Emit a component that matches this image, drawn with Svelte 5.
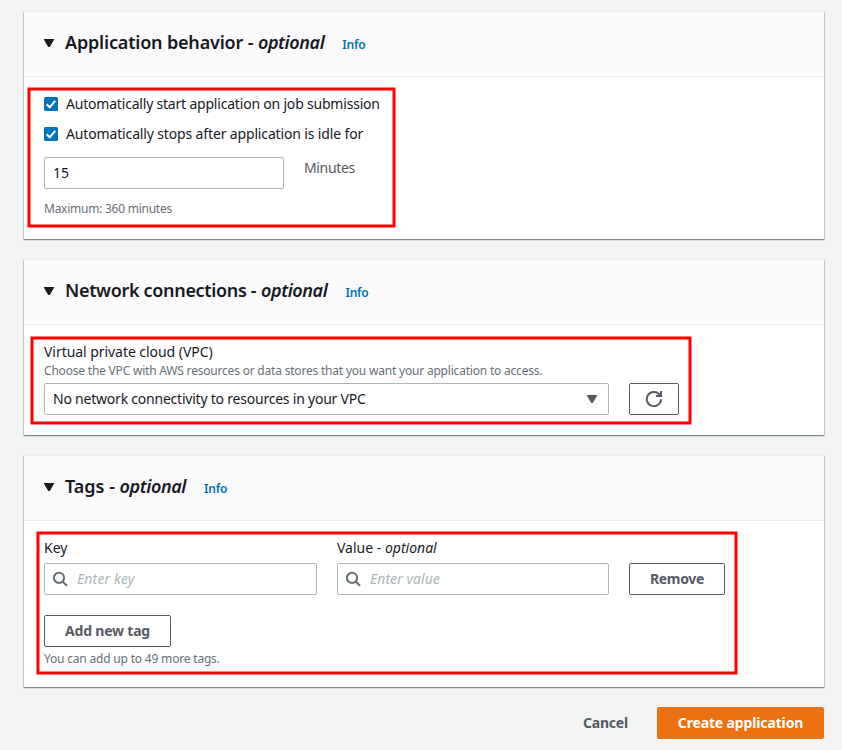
<script>
  const cards = [
    { id: 'behavior', title: 'Application behavior' },
    { id: 'network', title: 'Network connections' },
    { id: 'tags', title: 'Tags' }
  ];
  // Highlight frames: left, top, right, bottom of the stroke centre
  const marks = [
    [29, 89, 394, 226],
    [32, 338, 690, 423],
    [38, 533, 736, 673]
  ];
</script>

{#snippet searchIcon()}
  <svg class="search" width="16" height="16" viewBox="0 0 16 16" fill="none" stroke="#687078" stroke-width="2.1">
    <circle cx="6" cy="6.8" r="5.1" />
    <path d="M9.6 10.4 14 14.8" />
  </svg>
{/snippet}

{#snippet check(label, cls)}
  <label class="check">
    <svg width="14" height="14" viewBox="0 0 14 14">
      <rect width="14" height="14" rx="1.5" fill="#0073bb" />
      <path d="M2.6 7.2 5.7 10.2 11.2 3.8" fill="none" stroke="#fff" stroke-width="2" />
    </svg>
    <span class={cls}>{label}</span>
  </label>
{/snippet}

<main>
  {#each cards as card}
    <section class="card {card.id}">
      <header>
        <svg class="caret" width="10" height="8" viewBox="0 0 10 8"><path d="M0 0h10v.8L5.8 8H4.2L0 .8z" fill="#16191f" /></svg>
        <h2><span class="name">{card.title} -</span> <i>optional</i></h2>
        <span class="info">Info</span>
      </header>
      <div class="body">
        {#if card.id === 'behavior'}
          {@render check('Automatically start application on job submission', 'c1')}
          {@render check('Automatically stops after application is idle for', 'c2')}
          <div class="row idle">
            <div class="field num"><span>15</span></div>
            <span class="unit">Minutes</span>
          </div>
          <p class="hint max"><span>Maximum: 360 minutes</span></p>
        {:else if card.id === 'network'}
          <p class="label"><span class="vpc">Virtual private cloud (VPC)</span></p>
          <p class="hint desc"><span>Choose the VPC with AWS resources or data stores that you want your application to access.</span></p>
          <div class="row">
            <div class="field select">
              <span>No network connectivity to resources in your VPC</span>
              <svg width="10" height="8" viewBox="0 0 10 8"><path d="M0 0h10v.8L5.8 8H4.2L0 .8z" fill="#545b64" /></svg>
            </div>
            <div class="btn refresh">
              <svg width="18" height="18" viewBox="0 0 18 18" fill="none" stroke="#545b64" stroke-width="2">
                <path d="M16 9.2a7.1 7.1 0 1 1-2.2-5.3L16 6" />
                <path d="M16 .9v5h-5" />
              </svg>
            </div>
          </div>
        {:else}
          <div class="row">
            <div class="key">
              <p class="label"><span>Key</span></p>
              <div class="field">{@render searchIcon()}<i class="ph k">Enter key</i></div>
            </div>
            <div class="value">
              <p class="label"><span>Value - <i>optional</i></span></p>
              <div class="field">{@render searchIcon()}<i class="ph v">Enter value</i></div>
            </div>
            <div class="btn remove"><span>Remove</span></div>
          </div>
          <div class="btn add"><span>Add new tag</span></div>
          <p class="hint more"><span>You can add up to 49 more tags.</span></p>
        {/if}
      </div>
    </section>
  {/each}
  <footer>
    <span class="cancel">Cancel</span>
    <div class="btn create"><span>Create application</span></div>
  </footer>
  <svg class="marks" width="842" height="750" viewBox="0 0 842 750" fill="none" stroke="#f00" stroke-width="3">
    {#each marks as [l, t, r, b]}
      <rect x={l} y={t} width={r - l} height={b - t} />
    {/each}
  </svg>
</main>

<style>
  :global(body) { background: #f2f3f3; }
  main {
    position: relative; box-sizing: border-box; width: 842px; height: 750px; overflow: hidden;
    padding: 11px 18px 0 24px; background: #f2f3f3; color: #16191f;
    font: 14px/22px "Noto Sans", "Open Sans", sans-serif;
    display: flex; flex-direction: column; gap: 20px;
  }
  main :global(*) { box-sizing: border-box; }
  p, h2 { margin: 0; white-space: nowrap; }
  span, i { white-space: nowrap; }
  svg { display: block; flex: none; }
  .card {
    width: 800px; background: #fff; border-top: 1px solid #eaeded;
    box-shadow: 0 1px 1px 0 rgba(0,28,36,.3), 1px 1px 1px 0 rgba(0,28,36,.15), -1px 1px 1px 0 rgba(0,28,36,.15);
  }
  .behavior { height: 228px; }
  .network { height: 176px; }
  .tags { height: 232px; }
  header {
    height: 65px; background: #fafafa; border-bottom: 1px solid #eaeded;
    display: flex; align-items: center; padding: 0 20px 2px;
  }
  h2 { font-size: 18px; font-weight: 600; line-height: 22px; margin: 0 0 2px 11px; }
  h2 i { letter-spacing: -.4px; }
  .behavior .name { letter-spacing: -.18px; }
  .network .name { letter-spacing: -.33px; }
  .info { font-size: 12px; font-weight: 600; color: #0073bb; margin: 4px 0 0 18px; letter-spacing: -.2px; }
  .body { padding: 16px 20px 0; }
  .check { display: flex; align-items: center; gap: 8px; height: 22px; margin-bottom: 8px; }
  .c1 { letter-spacing: -.2px; }
  .c2 { letter-spacing: -.145px; }
  .row { display: flex; gap: 20px; }
  .field {
    height: 32px; border: 1px solid #aab7b8; border-radius: 2px; background: #fff;
    display: flex; align-items: center; padding: 0 8px;
  }
  .num { width: 240px; }
  .idle { margin-top: 12px; }
  .unit { color: #545b64; letter-spacing: -.35px; }
  .hint { font-size: 12px; color: #687078; line-height: 16px; }
  .max { margin-top: 12px; letter-spacing: -.25px; }
  .label { line-height: 22px; }
  .vpc { letter-spacing: -.05px; }
  .desc { margin-bottom: 4px; letter-spacing: -.2px; }
  .select { width: 565px; justify-content: space-between; padding-right: 11px; letter-spacing: -.22px; }
  .btn {
    height: 32px; border: 1px solid #545b64; border-radius: 2px; color: #545b64;
    font-weight: 700; display: flex; align-items: center; justify-content: center;
  }
  .refresh { width: 50px; }
  .key { width: 273px; }
  .value { width: 272px; }
  .key .label, .value .label { margin-bottom: 4px; }
  .ph { color: #aab7b8; margin-left: 8px; }
  .k { letter-spacing: .15px; }
  .v { letter-spacing: .05px; }
  .remove { width: 96px; align-self: flex-end; letter-spacing: -.33px; }
  .add { width: 127px; margin-top: 20px; letter-spacing: -.2px; }
  .more { margin-top: 4px; letter-spacing: -.19px; }
  .marks { position: absolute; left: 0; top: 0; pointer-events: none; }
  footer { display: flex; align-items: center; justify-content: flex-end; gap: 29px; }
  .cancel { font-weight: 700; color: #545b64; letter-spacing: -.2px; }
  .create { width: 167px; background: #ec7211; border-color: #ec7211; color: #fff; letter-spacing: -.14px; }
</style>
